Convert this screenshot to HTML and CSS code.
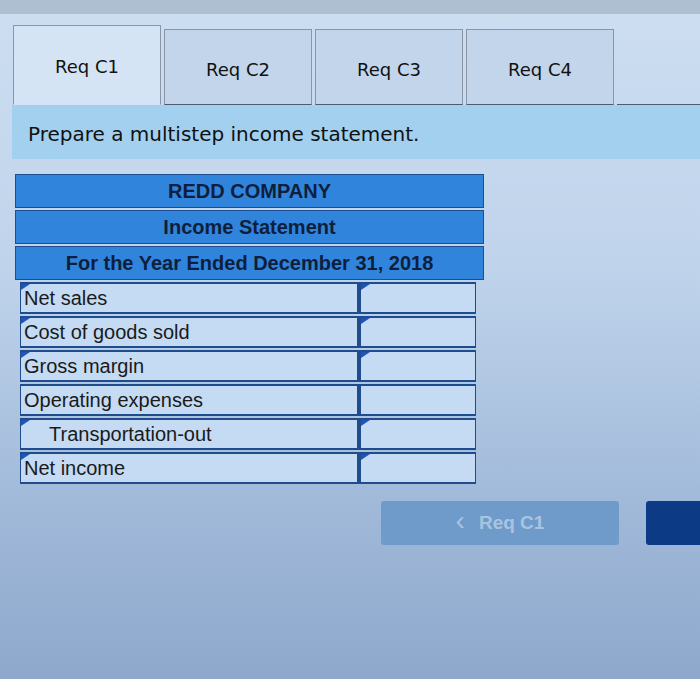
FILE: index.html
```html
<!DOCTYPE html>
<html>
<head>
<meta charset="utf-8">
<link rel="stylesheet" href="styles.css">
</head>
<body>
<div class="page">
  <div class="topband"></div>
  <div class="tabs">
    <div class="tab active">Req C1</div>
    <div class="tab">Req C2</div>
    <div class="tab">Req C3</div>
    <div class="tab">Req C4</div>
    <div class="tab-rest"></div>
  </div>
  <div class="instruction">Prepare a multistep income statement.</div>
  <div class="statement">
    <div class="head">REDD COMPANY</div>
    <div class="head">Income Statement</div>
    <div class="head">For the Year Ended December 31, 2018</div>
    <div class="row"><div class="label mark">Net sales</div><div class="value mark"></div></div>
    <div class="row"><div class="label mark">Cost of goods sold</div><div class="value mark"></div></div>
    <div class="row"><div class="label mark">Gross margin</div><div class="value mark"></div></div>
    <div class="row"><div class="label">Operating expenses</div><div class="value"></div></div>
    <div class="row"><div class="label mark indent">Transportation-out</div><div class="value mark"></div></div>
    <div class="row"><div class="label mark">Net income</div><div class="value mark"></div></div>
  </div>
  <div class="nav">
    <div class="btn prev"><span class="chev">&lsaquo;</span> Req C1</div>
    <div class="btn next"></div>
  </div>
</div>
</body>
</html>
```
FILE: styles.css
```css
html, body {
  margin: 0;
  padding: 0;
}
body {
  width: 700px;
  height: 679px;
  overflow: hidden;
  background: linear-gradient(180deg, #cddef1 0%, #bfd3eb 40%, #a0b9d9 75%, #8ea8cc 100%);
  font-family: "DejaVu Sans", Verdana, sans-serif;
}
.page {
  display: flex;
  flex-direction: column;
}
.topband {
  height: 14px;
  background: #aebfd2;
}
.tabs {
  display: flex;
  align-items: flex-end;
  margin-top: 11px;
  padding-left: 13px;
  gap: 3px;
}
.tab {
  width: 148px;
  height: 76px;
  border: 1px solid #8a96a6;
  border-bottom: 1px solid #4f5c6e;
  background: #c3d5ea;
  color: #111;
  font-size: 18px;
  display: flex;
  justify-content: center;
  align-items: center;
  padding-top: 4px;
  box-sizing: border-box;
}
.tab.active {
  background: #d5e4f4;
  border-bottom-color: transparent;
  height: 80px;
  padding-top: 2px;
}
.tab-rest {
  flex: 1;
  border-bottom: 1px solid #4f5c6e;
}
.instruction {
  margin-left: 12px;
  height: 54px;
  background: #a2d0ee;
  font-size: 20px;
  color: #111;
  padding-left: 16px;
  padding-top: 3px;
  display: flex;
  align-items: center;
  box-sizing: border-box;
}
.statement {
  margin-top: 15px;
  margin-left: 15px;
  width: 469px;
  display: flex;
  flex-direction: column;
  gap: 2px;
  font-family: "Liberation Sans", Arial, sans-serif;
}
.head {
  height: 34px;
  background: #3184db;
  border: 1px solid #1d4f8f;
  color: #0d1f3d;
  font-weight: bold;
  font-size: 20px;
  display: flex;
  justify-content: center;
  align-items: center;
  box-sizing: border-box;
}
.row {
  display: flex;
  height: 32px;
  padding-left: 5px;
  padding-right: 8px;
}
.label, .value {
  position: relative;
  background: #c4dbf3;
  border: 1px solid #1e4c8c;
  border-top-width: 2px;
  border-bottom-width: 2px;
  box-sizing: border-box;
  display: flex;
  align-items: center;
  font-size: 20px;
  color: #1a1a1a;
  padding-left: 3px;
}
.label {
  flex: 1;
}
.value {
  width: 118px;
  border-left-width: 3px;
}
.label.indent {
  padding-left: 28px;
}
.mark::before {
  content: "";
  position: absolute;
  left: 0;
  top: 0;
  border-top: 6px solid #1f55b8;
  border-right: 9px solid transparent;
}
.nav {
  display: flex;
  margin-top: 17px;
  padding-left: 381px;
  gap: 27px;
}
.btn {
  height: 44px;
  border-radius: 3px;
}
.btn.prev {
  width: 238px;
  background: #6f9bcb;
  color: #a8c4e0;
  font-family: "Liberation Sans", Arial, sans-serif;
  font-weight: bold;
  font-size: 19px;
  display: flex;
  align-items: center;
  justify-content: center;
  gap: 14px;
}
.chev {
  font-weight: normal;
  font-size: 28px;
  margin-top: -4px;
}
.btn.next {
  flex: 1;
  background: #0d3a85;
  border-radius: 3px 0 0 3px;
}
```
